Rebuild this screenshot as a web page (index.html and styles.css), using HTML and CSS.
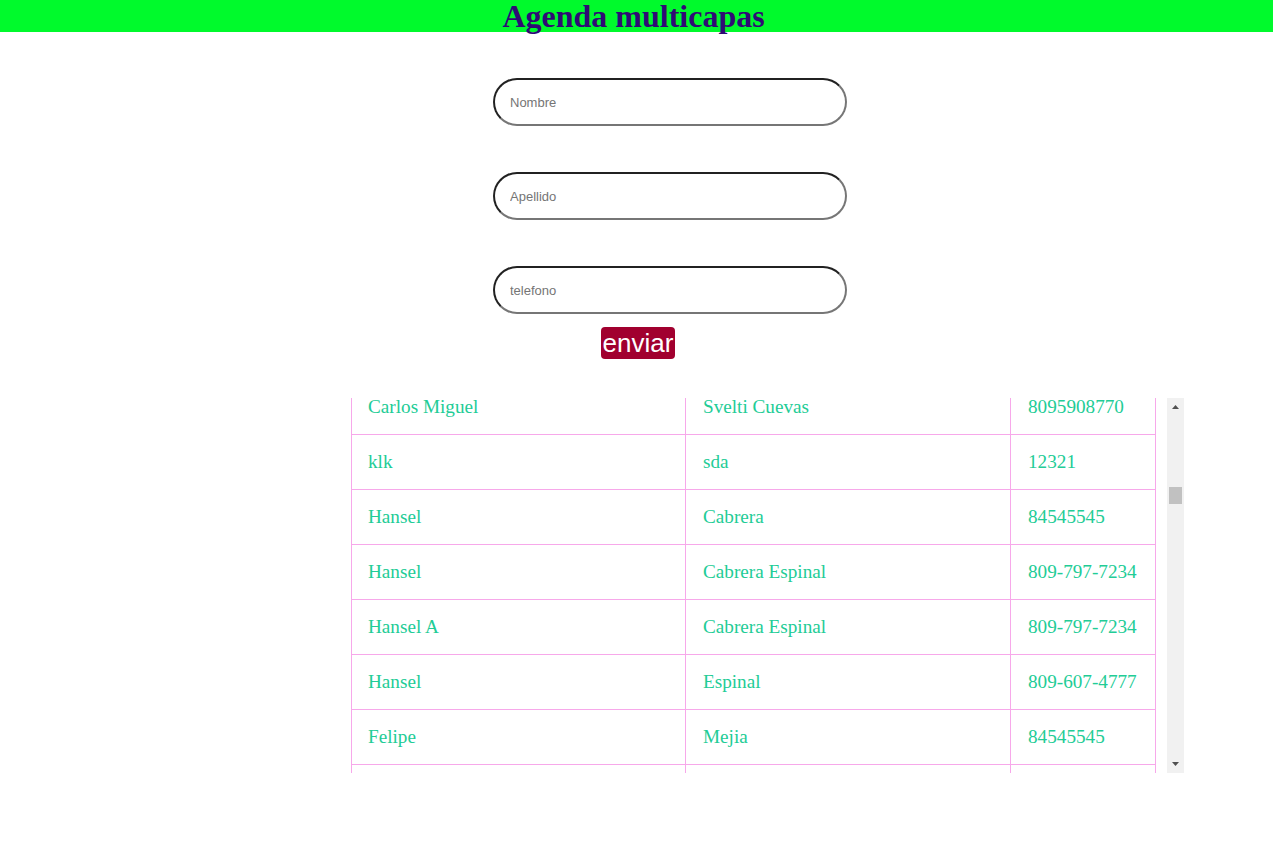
FILE: index.html
```html
<!DOCTYPE html>
<html lang="es">
<head>
<meta charset="utf-8">
<title>Agenda multicapas</title>
<link rel="stylesheet" href="styles.css">
</head>
<body>
<header class="topbar">
  <h1 class="title">Agenda multicapas</h1>
</header>
<form class="contact-form">
  <input class="field" type="text" placeholder="Nombre">
  <input class="field" type="text" placeholder="Apellido">
  <input class="field" type="text" placeholder="telefono">
  <button class="send" type="button">enviar</button>
</form>
<div class="table-box">
  <div class="table-wrap" id="wrap">
    <table class="contacts">
      <colgroup>
        <col class="c-name">
        <col class="c-last">
        <col class="c-phone">
      </colgroup>
      <tbody id="rows">
        <tr><td>Carlos Miguel</td><td>Svelti Cuevas</td><td>8095908770</td></tr>
        <tr id="anchor"><td>klk</td><td>sda</td><td>12321</td></tr>
        <tr><td>Hansel</td><td>Cabrera</td><td>84545545</td></tr>
        <tr><td>Hansel</td><td>Cabrera Espinal</td><td>809-797-7234</td></tr>
        <tr><td>Hansel A</td><td>Cabrera Espinal</td><td>809-797-7234</td></tr>
        <tr><td>Hansel</td><td>Espinal</td><td>809-607-4777</td></tr>
        <tr><td>Felipe</td><td>Mejia</td><td>84545545</td></tr>
      </tbody>
    </table>
  </div>
  <div class="scrollbar" aria-hidden="true">
    <div class="sb-btn">
      <svg width="7" height="4" viewBox="0 0 7 4"><polygon points="0,4 3.5,0 7,4" fill="#505050"/></svg>
    </div>
    <div class="sb-track">
      <div class="sb-thumb"></div>
    </div>
    <div class="sb-btn sb-down">
      <svg width="7" height="4" viewBox="0 0 7 4"><polygon points="0,0 7,0 3.5,4" fill="#505050"/></svg>
    </div>
  </div>
</div>
<script src="app.js"></script>
</body>
</html>
```

FILE: styles.css
```css
html, body {
  margin: 0;
  padding: 0;
  background: #ffffff;
}

.topbar {
  background: #00fa2c;
  height: 32px;
}

.title {
  margin: 0;
  padding-right: 6px;
  font-family: "Liberation Serif", "Times New Roman", serif;
  font-size: 32px;
  font-weight: bold;
  line-height: 32px;
  color: #2f0b74;
  text-align: center;
}

.contact-form {
  display: flex;
  flex-direction: column;
  align-items: center;
  padding-top: 46px;
}

.field {
  box-sizing: border-box;
  width: 354px;
  height: 48px;
  margin: 0 0 46px 67px;
  padding: 0 15px;
  border: 2px inset #767676;
  border-radius: 24px;
  font-family: "Liberation Sans", Arial, sans-serif;
  font-size: 13px;
  color: #222;
  background: #fff;
  outline: none;
}

.field:nth-of-type(3) {
  margin-bottom: 13px;
}

.field::placeholder {
  color: #757575;
}

.send {
  margin: 0 0 0 3px;
  padding: 0 2px;
  height: 32px;
  border: none;
  border-radius: 4px;
  background: #a1002f;
  color: #ffffff;
  font-family: "Liberation Sans", Arial, sans-serif;
  font-size: 26px;
  line-height: 30px;
}

.table-box {
  display: flex;
  margin: 39px 0 0 351px;
  width: 833px;
  height: 375px;
}

.table-wrap {
  width: 816px;
  height: 375px;
  overflow-y: scroll;
  scrollbar-width: none;
}

.table-wrap::-webkit-scrollbar {
  display: none;
  width: 0;
}

.scrollbar {
  width: 17px;
  height: 375px;
  display: flex;
  flex-direction: column;
  background: #f1f1f1;
}

.sb-btn {
  height: 17px;
  display: flex;
  justify-content: center;
  align-items: flex-start;
  padding-top: 7px;
  box-sizing: border-box;
}

.sb-btn svg {
  display: block;
}

.sb-down {
  padding-top: 6px;
}

.sb-track {
  flex: 1;
  display: flex;
  flex-direction: column;
  align-items: center;
}

.sb-thumb {
  margin-top: 72px;
  width: 13px;
  height: 17px;
  background: #c1c1c1;
}

.contacts {
  border-collapse: collapse;
  table-layout: fixed;
  width: 804px;
  font-family: "Liberation Serif", "Times New Roman", serif;
  font-size: 19.2px;
  color: #22cc96;
}

.c-name { width: 334px; }
.c-last { width: 325px; }
.c-phone { width: 145px; }

.contacts td {
  border: 1px solid #f7a8ea;
  padding: 16px 16px 16px 17px;
  line-height: 22px;
  white-space: nowrap;
}

.contacts td:first-child {
  padding-left: 16px;
}
```

FILE: app.js
```js
(function () {
  var pool = [
    ["Carlos Miguel", "Svelti Cuevas", "8095908770"],
    ["klk", "sda", "12321"],
    ["Hansel", "Cabrera", "84545545"],
    ["Hansel", "Cabrera Espinal", "809-797-7234"],
    ["Hansel A", "Cabrera Espinal", "809-797-7234"],
    ["Hansel", "Espinal", "809-607-4777"],
    ["Felipe", "Mejia", "84545545"]
  ];
  function makeRow(d) {
    var tr = document.createElement("tr");
    for (var i = 0; i < d.length; i++) {
      var td = document.createElement("td");
      td.textContent = d[i];
      tr.appendChild(td);
    }
    return tr;
  }
  var body = document.getElementById("rows");
  var first = body.firstElementChild;
  for (var i = 0; i < 27; i++) {
    body.insertBefore(makeRow(pool[i % pool.length]), first);
  }
  for (var j = 0; j < 94; j++) {
    body.appendChild(makeRow(pool[(j + 3) % pool.length]));
  }
  var wrap = document.getElementById("wrap");
  var anchor = document.getElementById("anchor");
  var offset = anchor.getBoundingClientRect().top - wrap.getBoundingClientRect().top + wrap.scrollTop;
  wrap.scrollTop = offset - 37;
})();
```
